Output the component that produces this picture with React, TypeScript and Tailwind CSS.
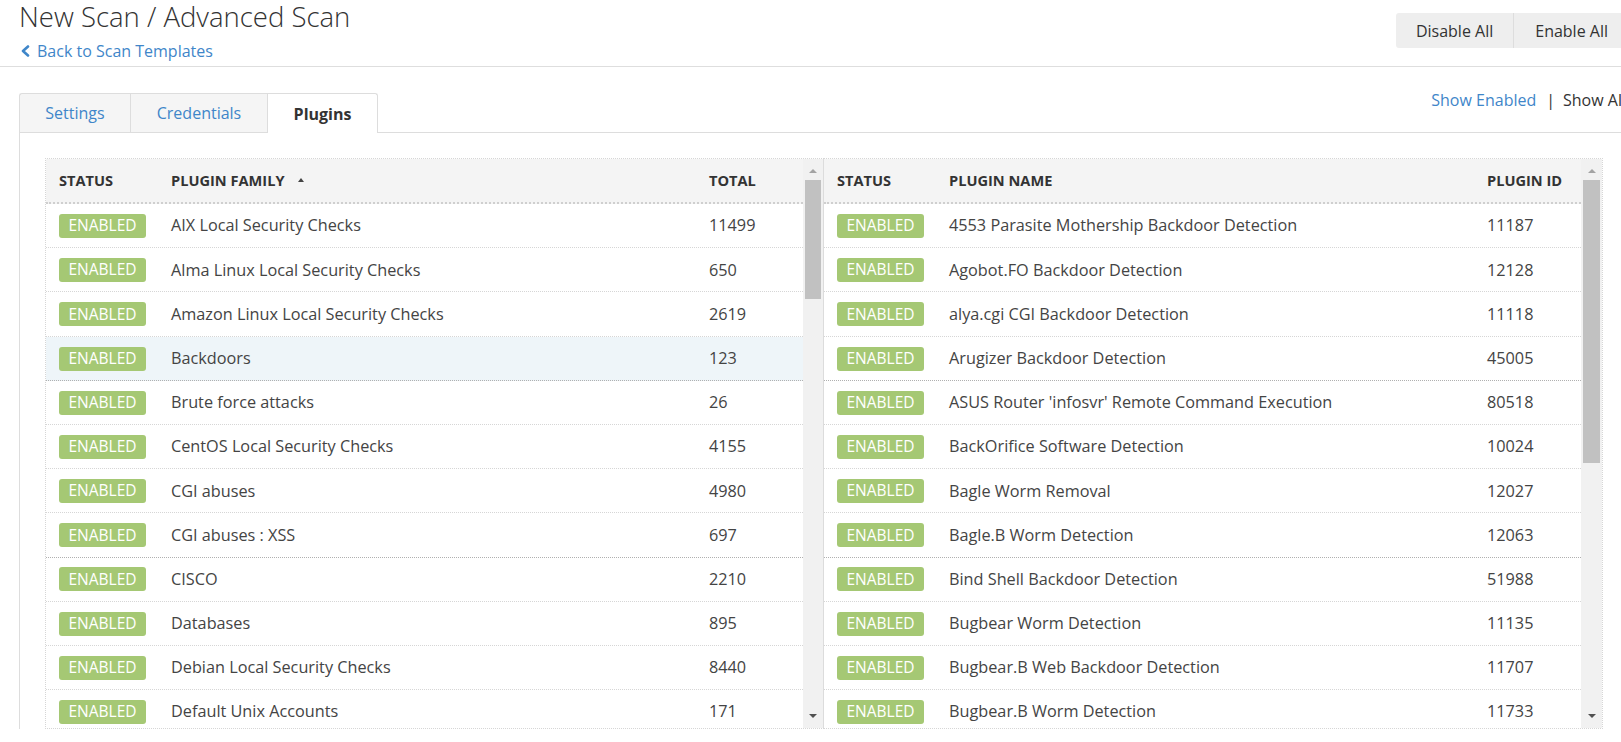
import React from "react";

type Row = { name: string; num: string; hl?: boolean; dark?: boolean };

const leftRows: Row[] = [
  { name: "AIX Local Security Checks", num: "11499" },
  { name: "Alma Linux Local Security Checks", num: "650" },
  { name: "Amazon Linux Local Security Checks", num: "2619" },
  { name: "Backdoors", num: "123", hl: true, dark: true },
  { name: "Brute force attacks", num: "26" },
  { name: "CentOS Local Security Checks", num: "4155" },
  { name: "CGI abuses", num: "4980" },
  { name: "CGI abuses : XSS", num: "697", dark: true },
  { name: "CISCO", num: "2210" },
  { name: "Databases", num: "895" },
  { name: "Debian Local Security Checks", num: "8440" },
  { name: "Default Unix Accounts", num: "171" },
];

const rightRows: Row[] = [
  { name: "4553 Parasite Mothership Backdoor Detection", num: "11187" },
  { name: "Agobot.FO Backdoor Detection", num: "12128" },
  { name: "alya.cgi CGI Backdoor Detection", num: "11118" },
  { name: "Arugizer Backdoor Detection", num: "45005", dark: true },
  { name: "ASUS Router 'infosvr' Remote Command Execution", num: "80518" },
  { name: "BackOrifice Software Detection", num: "10024" },
  { name: "Bagle Worm Removal", num: "12027" },
  { name: "Bagle.B Worm Detection", num: "12063", dark: true },
  { name: "Bind Shell Backdoor Detection", num: "51988" },
  { name: "Bugbear Worm Detection", num: "11135" },
  { name: "Bugbear.B Web Backdoor Detection", num: "11707" },
  { name: "Bugbear.B Worm Detection", num: "11733" },
];

function UpArrow() {
  return (
    <svg width="8" height="4" viewBox="0 0 8 4">
      <polygon points="0,4 8,4 4,0" fill="#a3a3a3" />
    </svg>
  );
}

function DownArrow() {
  return (
    <svg width="8" height="4" viewBox="0 0 8 4">
      <polygon points="0,0 8,0 4,4" fill="#505050" />
    </svg>
  );
}

function Scrollbar({ thumbClass, solidRight }: { thumbClass: string; solidRight?: boolean }) {
  return (
    <div
      className={
        "flex w-[21px] shrink-0 flex-col bg-[#f1f1f1] " +
        (solidRight ? "border-r border-solid border-[#dcdcdc]" : "")
      }
    >
      <div className="flex h-[21px] items-center justify-center pt-[2px]">
        <UpArrow />
      </div>
      <div className={"mx-[2px] bg-[#c1c1c1] " + thumbClass} />
      <div className="flex-1" />
      <div className="flex h-[24px] items-center justify-center">
        <DownArrow />
      </div>
    </div>
  );
}

function Badge() {
  return (
    <span className="inline-flex h-[24px] w-[87px] items-center justify-center rounded-[3px] bg-[#a5c874] text-[15.5px] leading-none text-white">
      ENABLED
    </span>
  );
}

function SortArrow() {
  return (
    <svg width="6" height="4" viewBox="0 0 6 4" className="ml-[13px] inline-block">
      <polygon points="0,4 6,4 3,0" fill="#444" />
    </svg>
  );
}

function Table({
  headers,
  rows,
  sorted,
}: {
  headers: [string, string, string];
  rows: Row[];
  sorted?: boolean;
}) {
  return (
    <div className="min-w-0 flex-1">
      <div className="grid h-[45px] grid-cols-[112px_538px_1fr] items-center border-b-2 border-dotted border-[#cfcfcf] bg-[#f4f4f4] text-[14.6px] font-bold text-[#333]">
        <div className="pl-[13px]">{headers[0]}</div>
        <div className="flex items-center pl-[13px]">
          {headers[1]}
          {sorted && <SortArrow />}
        </div>
        <div className="pl-[13px]">{headers[2]}</div>
      </div>
      <div className="h-[524px] overflow-hidden">
        {rows.map((r) => (
          <div
            key={r.name}
            className={
              "grid h-[44.2px] grid-cols-[112px_538px_1fr] items-center border-b border-dotted text-[16.25px] text-[#444] " +
              (r.dark ? "border-[#b0b0b0] " : "border-[#d6d6d6] ") +
              (r.hl ? "bg-[#eef5f9]" : "bg-white")
            }
          >
            <div className="pl-[13px]">
              <Badge />
            </div>
            <div className="truncate pl-[13px]">{r.name}</div>
            <div className="pl-[13px]">{r.num}</div>
          </div>
        ))}
      </div>
    </div>
  );
}

export default function App() {
  return (
    <div className="h-[742px] w-[1621px] overflow-hidden bg-white font-['Open_Sans',sans-serif] text-[#333]">
      <div className="w-[1648px] px-[19px]">
        {/* Header */}
        <div className="-mx-[19px] border-b border-[#dedede] px-[19px]">
          <div className="flex h-[66px] justify-between">
            <div>
              <h1 className="text-[27.5px] font-light leading-[33px] text-[#333]">
                New Scan / Advanced Scan
              </h1>
              <a className="mt-[7px] flex items-center gap-[6px] text-[16px] leading-[22px] text-[#3f86c9]">
                <svg width="11" height="12" viewBox="0 0 11 12" className="ml-[1px]">
                  <path
                    d="M8 1.5 L3 6 L8 10.5"
                    fill="none"
                    stroke="#3f86c9"
                    strokeWidth="2.6"
                    strokeLinecap="round"
                    strokeLinejoin="round"
                  />
                </svg>
                Back to Scan Templates
              </a>
            </div>
            <div className="mt-[13px] flex h-[35px] rounded-[3px] bg-[#eeeeee] text-[16px] text-[#333]">
              <button className="border-r border-[#dddddd] px-[20px]">Disable All</button>
              <button className="px-[21px]">Enable All</button>
            </div>
          </div>
        </div>

        {/* Tabs row */}
        <div className="mt-[26px] flex items-start justify-between">
          <div className="relative z-10 flex text-[16px]">
            <div className="flex h-[40px] w-[111px] items-center justify-center rounded-tl-[3px] border-b border-l border-t border-[#dddddd] bg-[#f5f5f5] text-[#3f86c9]">
              Settings
            </div>
            <div className="flex h-[40px] w-[137px] items-center justify-center border-b border-l border-t border-[#dddddd] bg-[#f5f5f5] text-[#3f86c9]">
              Credentials
            </div>
            <div className="flex h-[40px] w-[111px] items-center justify-center rounded-tr-[3px] border-l border-r border-t border-[#dddddd] bg-white font-bold text-[#333]">
              Plugins
            </div>
          </div>
          <div className="-mt-[4px] mr-[3px] flex text-[16px] leading-[22px]">
            <span className="text-[#3f86c9]">Show Enabled</span>
            <span className="ml-[10px] mr-[8px] text-[#333]">|</span>
            <span className="text-[#333]">Show All</span>
          </div>
        </div>

        {/* Panel */}
        <div className="-mt-px border-l border-r border-t border-[#dddddd] px-[25px] pt-[25px]">
          <div className="flex">
            <div className="flex w-[779px] border-b border-l border-t border-dotted border-[#d6d6d6]">
              <Table headers={["STATUS", "PLUGIN FAMILY", "TOTAL"]} rows={leftRows} sorted />
              <Scrollbar thumbClass="h-[119px]" solidRight />
            </div>
            <div className="flex w-[779px] border-b border-r border-t border-dotted border-[#d6d6d6]">
              <Table headers={["STATUS", "PLUGIN NAME", "PLUGIN ID"]} rows={rightRows} />
              <Scrollbar thumbClass="h-[283px]" />
            </div>
          </div>
        </div>
      </div>
    </div>
  );
}
